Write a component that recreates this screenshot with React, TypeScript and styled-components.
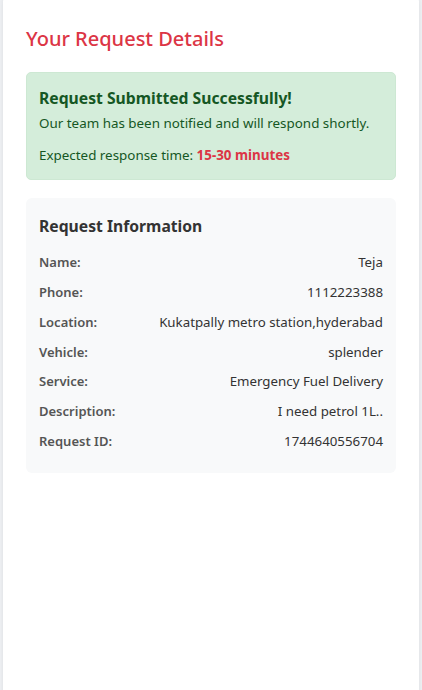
import React from "react";
import styled, { createGlobalStyle } from "styled-components";

const Global = createGlobalStyle`
  html, body { margin: 0; padding: 0; background: #eef0f3; }
  body { font-family: "Noto Sans", "Open Sans", sans-serif; }
  * { box-sizing: border-box; }
`;

const Page = styled.div`
  padding: 0 3px;
  height: 690px;
  overflow: hidden;
`;

const Card = styled.div`
  background: #ffffff;
  border-radius: 8px;
  margin-top: -6px;
  min-height: 720px;
  padding: 30px 23px 20px 23px;
  box-shadow: 0 1px 4px rgba(0, 0, 0, 0.08);
`;

const Title = styled.h2`
  margin: 0 0 18px 0;
  font-size: 20px;
  font-weight: 500;
  color: #dc3545;
  line-height: 30px;
`;

const SuccessBox = styled.div`
  background: #d4edda;
  border: 1px solid #cde8d3;
  border-radius: 5px;
  padding: 14px 12px 14px 12px;
  color: #155724;
  margin-bottom: 18px;
`;

const SuccessTitle = styled.h3`
  margin: 0 0 4px 0;
  font-size: 15.7px;
  font-weight: 700;
  line-height: 22px;
`;

const SuccessText = styled.p<{ $gap?: number }>`
  margin: 0;
  margin-top: ${(p) => p.$gap ?? 0}px;
  font-size: 13.4px;
  line-height: 20px;
`;

const Highlight = styled.strong`
  color: #dc3545;
  font-weight: 700;
`;

const InfoBox = styled.div`
  background: #f8f9fa;
  border-radius: 6px;
  padding: 15px 13px 22px 13px;
`;

const InfoTitle = styled.h3`
  margin: 0 0 13px 0;
  font-size: 15.7px;
  font-weight: 700;
  color: #333333;
  line-height: 26px;
`;

const Rows = styled.div`
  display: flex;
  flex-direction: column;
  gap: 9.85px;
`;

const Row = styled.div`
  display: flex;
  justify-content: space-between;
  align-items: center;
  font-size: 13px;
  line-height: 20px;
`;

const Label = styled.span`
  font-weight: 600;
  color: #555555;
`;

const Value = styled.span`
  color: #333333;
  text-align: right;
  font-size: 13.3px;
`;

const rows: [string, string][] = [
  ["Name:", "Teja"],
  ["Phone:", "1112223388"],
  ["Location:", "Kukatpally metro station,hyderabad"],
  ["Vehicle:", "splender"],
  ["Service:", "Emergency Fuel Delivery"],
  ["Description:", "I need petrol 1L.."],
  ["Request ID:", "1744640556704"],
];

export default function App() {
  return (
    <>
      <Global />
      <Page>
        <Card>
          <Title>Your Request Details</Title>
          <SuccessBox>
            <SuccessTitle>Request Submitted Successfully!</SuccessTitle>
            <SuccessText>Our team has been notified and will respond shortly.</SuccessText>
            <SuccessText $gap={12}>
              Expected response time: <Highlight>15-30 minutes</Highlight>
            </SuccessText>
          </SuccessBox>
          <InfoBox>
            <InfoTitle>Request Information</InfoTitle>
            <Rows>
              {rows.map(([l, v]) => (
                <Row key={l}>
                  <Label>{l}</Label>
                  <Value>{v}</Value>
                </Row>
              ))}
            </Rows>
          </InfoBox>
        </Card>
      </Page>
    </>
  );
}
